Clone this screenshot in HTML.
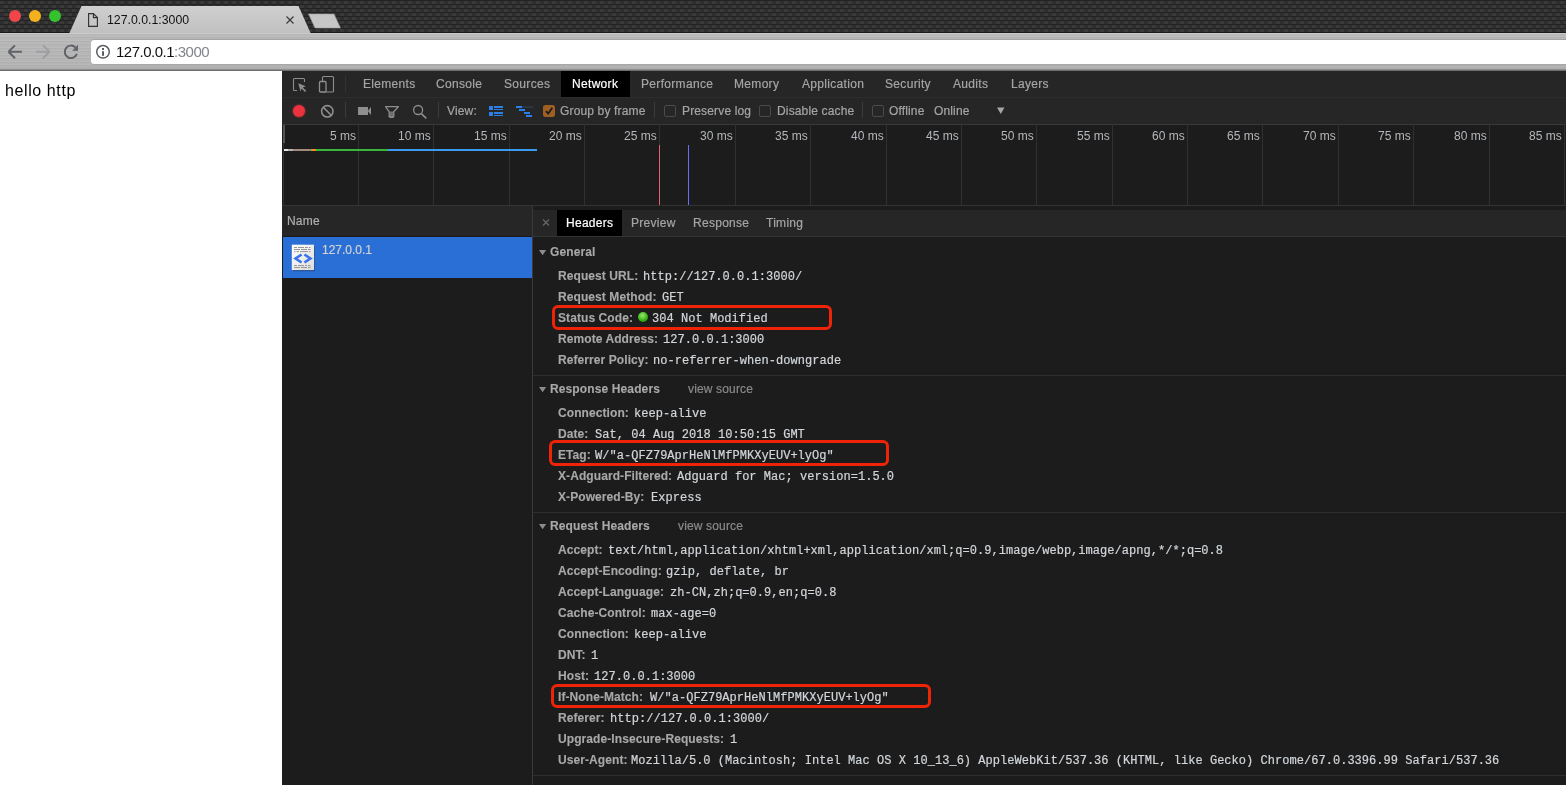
<!DOCTYPE html>
<html><head><meta charset="utf-8">
<style>
*{margin:0;padding:0;box-sizing:border-box}
html,body{width:1566px;height:785px;overflow:hidden;background:#fff;font-family:"Liberation Sans",sans-serif}
.a{position:absolute;white-space:nowrap;will-change:transform}
.r{position:absolute}
#strip{position:absolute;left:0;top:0;width:1566px;height:33px;background-color:#353535;border-bottom:1px solid #1c1c1c;
 background-image:
 linear-gradient(45deg,#232323 25%,transparent 25%,transparent 75%,#232323 75%),
 linear-gradient(45deg,#232323 25%,transparent 25%,transparent 75%,#232323 75%);
 background-size:8px 8px;background-position:0 0,4px 4px}
#toolbar{position:absolute;left:0;top:33px;width:1566px;height:38px;
 background:repeating-linear-gradient(180deg,rgba(255,255,255,0.07) 0 1px,rgba(0,0,0,0.03) 1px 2px,transparent 2px 3.5px),linear-gradient(#cecece 0px,#bfbfbf 1px,#b8b8b8 3px,#b4b4b4 34px,#a4a4a4 36px,#7a7a7a 37.2px,#5a5a5a 38px)}
#url{position:absolute;left:91px;top:40px;width:1475px;height:24px;background:#fff;border-radius:3px 0 0 3px;box-shadow:0 -1px 0 #a4a4a4,0 1px 0 #a8a8a8}
</style></head><body>
<svg class="a" style="left:0;top:0" width="1566" height="33"><defs><pattern id="cf" x="0" y="1" width="8" height="8" patternUnits="userSpaceOnUse">
<rect width="8" height="8" fill="#222"/>
<rect x="0" y="0" width="4" height="3" fill="#393939"/><rect x="0" y="4" width="4" height="3" fill="#2e2e2e"/>
<rect x="4" y="4" width="4" height="3" fill="#393939"/><rect x="4" y="0" width="4" height="3" fill="#2e2e2e"/>
</pattern></defs><rect width="1566" height="32" fill="url(#cf)"/><rect y="32" width="1566" height="1" fill="#1a1a1a"/></svg>
<svg class="a" style="left:0;top:0" width="360" height="34">
 <defs><linearGradient id="tabg" x1="0" y1="0" x2="0" y2="1"><stop offset="0" stop-color="#cfcfcf"/><stop offset="1" stop-color="#c0c0c0"/></linearGradient></defs>
 <polygon points="69,34 81.5,6 298.5,6 311,34" fill="url(#tabg)"/>
 <polygon points="308.5,14 334,14 340.5,28 315,28" fill="#c6c6c6" stroke="#9a9a9a" stroke-width="0.6"/>
 <circle cx="15" cy="16" r="6" fill="#f0464a"/>
 <circle cx="35" cy="16" r="6" fill="#f5b01e"/>
 <circle cx="55" cy="16" r="6" fill="#36c22e"/>
 <path d="M88.6,13.6 H93.4 L97.4,17.6 V26.4 H88.6 Z" fill="none" stroke="#333" stroke-width="1.15" stroke-linejoin="miter"/><path d="M93.4,13.6 V17.6 H97.4" fill="none" stroke="#333" stroke-width="1.15"/>
 <path d="M286.5,16.5 L293.5,23.5 M293.5,16.5 L286.5,23.5" stroke="#3a3a3a" stroke-width="1.2"/>
</svg>
<div class="a" style="left:107px;top:12.24px;font-size:12.3px;line-height:17px;color:#111;font-weight:normal;font-family:'Liberation Sans',sans-serif;">127.0.0.1:3000</div>
<div id="toolbar"></div><div id="url"></div>
<svg class="a" style="left:0;top:33px" width="120" height="38">
 <path d="M8.5,18.8 H21.8 M8.5,18.8 L15,12.4 M8.5,18.8 L15,25.2" stroke="#5f6266" stroke-width="2" fill="none"/>
 <path d="M49.5,18.8 H36.2 M49.5,18.8 L43,12.4 M49.5,18.8 L43,25.2" stroke="#9c9ea1" stroke-width="2" fill="none"/>
 <path d="M76.83,20.92 A6.2,6.2 0 1 1 75.38,14.42" stroke="#5f6266" stroke-width="2" fill="none"/>
 <path d="M78,11.8 L78,17.8 L72.2,17.8 Z" fill="#5f6266"/>
 <circle cx="103" cy="18.8" r="6.3" stroke="#5a5e63" stroke-width="1.5" fill="none"/>
 <rect x="102" y="18.2" width="2" height="4.6" fill="#5a5e63"/>
 <rect x="102" y="15" width="2" height="2" fill="#5a5e63"/>
</svg>
<div class="a" style="left:116px;top:41.30px;font-size:15px;line-height:21px;color:#111;font-weight:normal;font-family:'Liberation Sans',sans-serif;letter-spacing:-0.5px">127.0.0.1<span style="color:#80868b">:3000</span></div>
<div class="r" style="left:0;top:71px;width:282px;height:714px;background:#fff"></div>
<div class="a" style="left:5px;top:80.46px;font-size:16px;line-height:22px;color:#000;font-weight:normal;font-family:'Liberation Sans',sans-serif;letter-spacing:0.6px">hello http</div>
<div class="r" style="left:282px;top:71px;width:1284px;height:714px;background:#1c1c1c"></div>
<div class="r" style="left:282px;top:71px;width:1284px;height:27px;background:#262626;border-bottom:1px solid #2d2d2d"></div>
<div class="r" style="left:282px;top:98px;width:1284px;height:27px;background:#262626;border-bottom:1px solid #393939"></div>
<div class="r" style="left:561px;top:71px;width:69px;height:26px;background:#000"></div>
<div class="a" style="left:362.7px;top:76.34px;font-size:12px;line-height:17px;color:#a5a5a5;font-weight:normal;font-family:'Liberation Sans',sans-serif;letter-spacing:0.32px;-webkit-text-stroke:0.2px #a5a5a5">Elements</div>
<div class="a" style="left:435.5px;top:76.34px;font-size:12px;line-height:17px;color:#a5a5a5;font-weight:normal;font-family:'Liberation Sans',sans-serif;letter-spacing:0.32px;-webkit-text-stroke:0.2px #a5a5a5">Console</div>
<div class="a" style="left:503.7px;top:76.34px;font-size:12px;line-height:17px;color:#a5a5a5;font-weight:normal;font-family:'Liberation Sans',sans-serif;letter-spacing:0.32px;-webkit-text-stroke:0.2px #a5a5a5">Sources</div>
<div class="a" style="left:572.0px;top:76.34px;font-size:12px;line-height:17px;color:#fff;font-weight:normal;font-family:'Liberation Sans',sans-serif;letter-spacing:0.32px;-webkit-text-stroke:0.2px #fff">Network</div>
<div class="a" style="left:640.7px;top:76.34px;font-size:12px;line-height:17px;color:#a5a5a5;font-weight:normal;font-family:'Liberation Sans',sans-serif;letter-spacing:0.32px;-webkit-text-stroke:0.2px #a5a5a5">Performance</div>
<div class="a" style="left:733.8000000000001px;top:76.34px;font-size:12px;line-height:17px;color:#a5a5a5;font-weight:normal;font-family:'Liberation Sans',sans-serif;letter-spacing:0.32px;-webkit-text-stroke:0.2px #a5a5a5">Memory</div>
<div class="a" style="left:801.7px;top:76.34px;font-size:12px;line-height:17px;color:#a5a5a5;font-weight:normal;font-family:'Liberation Sans',sans-serif;letter-spacing:0.32px;-webkit-text-stroke:0.2px #a5a5a5">Application</div>
<div class="a" style="left:885.4000000000001px;top:76.34px;font-size:12px;line-height:17px;color:#a5a5a5;font-weight:normal;font-family:'Liberation Sans',sans-serif;letter-spacing:0.32px;-webkit-text-stroke:0.2px #a5a5a5">Security</div>
<div class="a" style="left:952.9000000000001px;top:76.34px;font-size:12px;line-height:17px;color:#a5a5a5;font-weight:normal;font-family:'Liberation Sans',sans-serif;letter-spacing:0.32px;-webkit-text-stroke:0.2px #a5a5a5">Audits</div>
<div class="a" style="left:1010.8000000000001px;top:76.34px;font-size:12px;line-height:17px;color:#a5a5a5;font-weight:normal;font-family:'Liberation Sans',sans-serif;letter-spacing:0.32px;-webkit-text-stroke:0.2px #a5a5a5">Layers</div>
<svg class="a" style="left:282px;top:71px" width="80" height="26">
 <path d="M15,19.5 H12.5 Q11.5,19.5 11.5,18.5 V8.5 Q11.5,7.5 12.5,7.5 H21.5 Q22.5,7.5 22.5,8.5 V11" fill="none" stroke="#8e8e8e" stroke-width="1.1"/>
 <path d="M16.2,12.2 L23.8,15.2 L20.8,16.4 L24.2,19.8 L23,21 L19.6,17.6 L18.6,20.4 Z" fill="#8e8e8e"/>
 <rect x="40.5" y="5.5" width="11" height="15.5" rx="1" fill="none" stroke="#8e8e8e" stroke-width="1.1"/>
 <rect x="37.5" y="10.5" width="6.5" height="10.5" rx="1" fill="#262626" stroke="#8e8e8e" stroke-width="1.3"/>
 <rect x="63" y="5" width="1" height="16" fill="#333"/>
</svg>
<svg class="a" style="left:282px;top:97px" width="280" height="27">
 <circle cx="17" cy="14" r="7.5" fill="#e8333d" opacity="0.18"/>
 <circle cx="17" cy="14" r="6.1" fill="#ea333e"/>
 <circle cx="45.3" cy="14.3" r="5.7" fill="none" stroke="#8e8e8e" stroke-width="1.6"/>
 <path d="M41.4,10.4 L49.2,18.2" stroke="#8e8e8e" stroke-width="1.6"/>
 <rect x="63" y="5" width="1" height="16" fill="#3a3a3a"/>
 <rect x="76" y="10" width="10" height="8" fill="#8e8e8e"/>
 <path d="M85.8,14 L89,10 V18 Z" fill="#8e8e8e"/>
 <path d="M107.6,14.6 H111.4 V19.6 Q109.5,21 107.6,19.6 Z" fill="#6e6e6e"/>
 <path d="M103.6,9.6 H116.4 L111.8,14.8 V19.6 Q109.5,21.2 107.2,19.6 V14.8 Z" fill="none" stroke="#8e8e8e" stroke-width="1.3" stroke-linejoin="round"/>
 <circle cx="136.1" cy="13" r="4.5" fill="none" stroke="#8e8e8e" stroke-width="1.3"/>
 <path d="M139.3,16.6 L144.3,21.4" stroke="#8e8e8e" stroke-width="1.6"/>
 <rect x="156" y="5" width="1" height="16" fill="#3a3a3a"/>
 <g fill="#2a80e6">
 <rect x="207" y="9" width="4" height="4"/><rect x="212" y="9" width="9" height="2"/><rect x="212" y="12" width="9" height="1"/>
 <rect x="207" y="15" width="4" height="4"/><rect x="212" y="15" width="9" height="2"/><rect x="212" y="18" width="9" height="1"/>
 <rect x="234" y="9" width="6" height="2"/><rect x="237" y="12" width="6" height="2"/><rect x="242" y="15" width="6" height="2"/><rect x="244" y="18" width="6" height="2"/>
 </g>
 <rect x="240" y="9" width="11" height="2" fill="#283646"/>
 <rect x="261" y="8" width="12" height="12" rx="2.5" fill="#a05f22"/>
 <path d="M263.9,14.2 L266.2,16.6 L270.3,10.8" fill="none" stroke="#1c1c1c" stroke-width="1.8"/>
</svg>
<div class="a" style="left:447.2px;top:103.34px;font-size:12px;line-height:17px;color:#a5a5a5;font-weight:normal;font-family:'Liberation Sans',sans-serif;letter-spacing:0.15px;-webkit-text-stroke:0.2px #a5a5a5">View:</div>
<div class="a" style="left:560.2px;top:103.34px;font-size:12px;line-height:17px;color:#a5a5a5;font-weight:normal;font-family:'Liberation Sans',sans-serif;letter-spacing:0.15px;-webkit-text-stroke:0.2px #a5a5a5">Group by frame</div>
<div class="r" style="left:654px;top:102px;width:1px;height:16px;background:#3a3a3a"></div>
<div class="r" style="left:664px;top:105px;width:12px;height:12px;border:1px solid #4a4a4a;border-radius:2px"></div>
<div class="r" style="left:759px;top:105px;width:12px;height:12px;border:1px solid #4a4a4a;border-radius:2px"></div>
<div class="r" style="left:872px;top:105px;width:12px;height:12px;border:1px solid #4a4a4a;border-radius:2px"></div>
<div class="a" style="left:681.7px;top:103.34px;font-size:12px;line-height:17px;color:#a5a5a5;font-weight:normal;font-family:'Liberation Sans',sans-serif;letter-spacing:0.15px;-webkit-text-stroke:0.2px #a5a5a5">Preserve log</div>
<div class="a" style="left:776.7px;top:103.34px;font-size:12px;line-height:17px;color:#a5a5a5;font-weight:normal;font-family:'Liberation Sans',sans-serif;letter-spacing:0.15px;-webkit-text-stroke:0.2px #a5a5a5">Disable cache</div>
<div class="r" style="left:862px;top:102px;width:1px;height:16px;background:#3a3a3a"></div>
<div class="a" style="left:888.9000000000001px;top:103.34px;font-size:12px;line-height:17px;color:#a5a5a5;font-weight:normal;font-family:'Liberation Sans',sans-serif;letter-spacing:0.15px;-webkit-text-stroke:0.2px #a5a5a5">Offline</div>
<div class="a" style="left:933.6px;top:103.34px;font-size:12px;line-height:17px;color:#a5a5a5;font-weight:normal;font-family:'Liberation Sans',sans-serif;letter-spacing:0.15px;-webkit-text-stroke:0.2px #a5a5a5">Online</div>
<svg class="a" style="left:995px;top:105px" width="12" height="12"><path d="M2,2.5 H9.5 L5.75,9 Z" fill="#a5a5a5"/></svg>
<div class="r" style="left:282px;top:205px;width:1284px;height:1px;background:#333"></div>
<div class="r" style="left:283px;top:125px;width:2px;height:18px;background:#555"></div>
<div class="r" style="left:283px;top:143px;width:1px;height:62px;background:#333"></div>
<div class="r" style="left:358.0px;top:124px;width:1px;height:81px;background:#303030"></div>
<div class="a" style="right:1210.0px;top:128.1px;font-size:12px;line-height:16px;color:#b4b8bc">5 ms</div>
<div class="r" style="left:433.0px;top:124px;width:1px;height:81px;background:#303030"></div>
<div class="a" style="right:1135.0px;top:128.1px;font-size:12px;line-height:16px;color:#b4b8bc">10 ms</div>
<div class="r" style="left:509.0px;top:124px;width:1px;height:81px;background:#303030"></div>
<div class="a" style="right:1059.0px;top:128.1px;font-size:12px;line-height:16px;color:#b4b8bc">15 ms</div>
<div class="r" style="left:584.0px;top:124px;width:1px;height:81px;background:#303030"></div>
<div class="a" style="right:984.0px;top:128.1px;font-size:12px;line-height:16px;color:#b4b8bc">20 ms</div>
<div class="r" style="left:659.0px;top:124px;width:1px;height:81px;background:#303030"></div>
<div class="a" style="right:909.0px;top:128.1px;font-size:12px;line-height:16px;color:#b4b8bc">25 ms</div>
<div class="r" style="left:735.0px;top:124px;width:1px;height:81px;background:#303030"></div>
<div class="a" style="right:833.0px;top:128.1px;font-size:12px;line-height:16px;color:#b4b8bc">30 ms</div>
<div class="r" style="left:810.0px;top:124px;width:1px;height:81px;background:#303030"></div>
<div class="a" style="right:758.0px;top:128.1px;font-size:12px;line-height:16px;color:#b4b8bc">35 ms</div>
<div class="r" style="left:886.0px;top:124px;width:1px;height:81px;background:#303030"></div>
<div class="a" style="right:682.0px;top:128.1px;font-size:12px;line-height:16px;color:#b4b8bc">40 ms</div>
<div class="r" style="left:961.0px;top:124px;width:1px;height:81px;background:#303030"></div>
<div class="a" style="right:607.0px;top:128.1px;font-size:12px;line-height:16px;color:#b4b8bc">45 ms</div>
<div class="r" style="left:1036.0px;top:124px;width:1px;height:81px;background:#303030"></div>
<div class="a" style="right:532.0px;top:128.1px;font-size:12px;line-height:16px;color:#b4b8bc">50 ms</div>
<div class="r" style="left:1112.0px;top:124px;width:1px;height:81px;background:#303030"></div>
<div class="a" style="right:456.0px;top:128.1px;font-size:12px;line-height:16px;color:#b4b8bc">55 ms</div>
<div class="r" style="left:1187.0px;top:124px;width:1px;height:81px;background:#303030"></div>
<div class="a" style="right:381.0px;top:128.1px;font-size:12px;line-height:16px;color:#b4b8bc">60 ms</div>
<div class="r" style="left:1262.0px;top:124px;width:1px;height:81px;background:#303030"></div>
<div class="a" style="right:306.0px;top:128.1px;font-size:12px;line-height:16px;color:#b4b8bc">65 ms</div>
<div class="r" style="left:1338.0px;top:124px;width:1px;height:81px;background:#303030"></div>
<div class="a" style="right:230.0px;top:128.1px;font-size:12px;line-height:16px;color:#b4b8bc">70 ms</div>
<div class="r" style="left:1413.0px;top:124px;width:1px;height:81px;background:#303030"></div>
<div class="a" style="right:155.0px;top:128.1px;font-size:12px;line-height:16px;color:#b4b8bc">75 ms</div>
<div class="r" style="left:1489.0px;top:124px;width:1px;height:81px;background:#303030"></div>
<div class="a" style="right:79.0px;top:128.1px;font-size:12px;line-height:16px;color:#b4b8bc">80 ms</div>
<div class="r" style="left:1564.0px;top:124px;width:1px;height:81px;background:#303030"></div>
<div class="a" style="right:4.0px;top:128.1px;font-size:12px;line-height:16px;color:#b4b8bc">85 ms</div>
<div class="r" style="left:284px;top:149px;width:4px;height:2px;background:#e4e4e4"></div>
<div class="r" style="left:288px;top:149px;width:5px;height:2px;background:#b4b4b4"></div>
<div class="r" style="left:293px;top:149px;width:17px;height:2px;background:#a3897e"></div>
<div class="r" style="left:310px;top:149px;width:1px;height:2px;background:#2aa198"></div>
<div class="r" style="left:311px;top:149px;width:5px;height:2px;background:#f68b1f"></div>
<div class="r" style="left:316px;top:149px;width:72px;height:2px;background:#3cb53c"></div>
<div class="r" style="left:388px;top:149px;width:149px;height:2px;background:#3a9bf0"></div>
<div class="r" style="left:659px;top:145px;width:1px;height:60px;background:#e0636b"></div>
<div class="r" style="left:688px;top:145px;width:1px;height:60px;background:#6a6ef0"></div>
<div class="r" style="left:282px;top:206px;width:250px;height:31px;background:#262626;border-bottom:1px solid #1a1a1a"></div>
<div class="a" style="left:287px;top:213.34px;font-size:12px;line-height:17px;color:#b0b0b0;font-weight:normal;font-family:'Liberation Sans',sans-serif;letter-spacing:0.2px;-webkit-text-stroke:0.2px #b0b0b0">Name</div>
<div class="r" style="left:283px;top:237px;width:249px;height:41px;background:#2a6fd5"></div>
<svg class="a" style="left:291px;top:244px" width="26" height="29">
 <defs><linearGradient id="icg" x1="0" y1="0" x2="1" y2="1"><stop offset="0" stop-color="#fff"/><stop offset="1" stop-color="#dcdcdc"/></linearGradient></defs>
 <rect x="1.8" y="1.8" width="22.2" height="25.4" fill="#0b2a55" opacity="0.55"/>
 <rect x="0.8" y="0.7" width="22.3" height="25.4" fill="url(#icg)"/>
 <g stroke="#8a8a8a" stroke-width="0.9" fill="none">
 <path d="M3,3.5 H6 M7,3.5 H13 M14,3.5 H17 M18,3.5 H19.5"/>
 <path d="M3,5.5 H9 M10,5.5 H16 M17,5.5 H19.5"/>
 <path d="M3,7.6 H4.5 M5.5,7.6 H8 M9,7.6 H17 M18,7.6 H19.5"/>
 <path d="M3,21.6 H6 M7,21.6 H13 M14,21.6 H16 M17,21.6 H19.5"/>
 <path d="M3,23.6 H9 M10,23.6 H16 M17,23.6 H19.5"/>
 </g>
 <path d="M10.6,10.5 L4.6,14.5 L10.6,18.5 M13.4,10.5 L19.4,14.5 L13.4,18.5" fill="none" stroke="#3a74ea" stroke-width="2.7"/>
</svg>
<div class="a" style="left:322px;top:242.34px;font-size:12px;line-height:17px;color:#d2d2d2;font-weight:normal;font-family:'Liberation Sans',sans-serif;-webkit-text-stroke:0.2px #d2d2d2">127.0.0.1</div>
<div class="r" style="left:532px;top:206px;width:1px;height:579px;background:#3a3a3a"></div>
<div class="r" style="left:533px;top:210px;width:1033px;height:27px;background:#262626;border-bottom:1px solid #353535"></div>
<div class="r" style="left:557px;top:210px;width:65px;height:26px;background:#000"></div>
<svg class="a" style="left:540px;top:216px" width="12" height="12"><path d="M3,3.5 L9,9.5 M9,3.5 L3,9.5" stroke="#6a6a6a" stroke-width="1.1"/></svg>
<div class="a" style="left:566.2px;top:215.34px;font-size:12px;line-height:17px;color:#fff;font-weight:normal;font-family:'Liberation Sans',sans-serif;letter-spacing:0.28px;-webkit-text-stroke:0.2px #fff">Headers</div>
<div class="a" style="left:630.9000000000001px;top:215.34px;font-size:12px;line-height:17px;color:#a5a5a5;font-weight:normal;font-family:'Liberation Sans',sans-serif;letter-spacing:0.28px;-webkit-text-stroke:0.2px #a5a5a5">Preview</div>
<div class="a" style="left:692.6px;top:215.34px;font-size:12px;line-height:17px;color:#a5a5a5;font-weight:normal;font-family:'Liberation Sans',sans-serif;letter-spacing:0.28px;-webkit-text-stroke:0.2px #a5a5a5">Response</div>
<div class="a" style="left:765.7px;top:215.34px;font-size:12px;line-height:17px;color:#a5a5a5;font-weight:normal;font-family:'Liberation Sans',sans-serif;letter-spacing:0.28px;-webkit-text-stroke:0.2px #a5a5a5">Timing</div>
<svg class="a" style="left:538px;top:248px" width="10" height="8"><path d="M1,1.9 H8.2 L4.6,7.3 Z" fill="#8c8c8c"/></svg>
<div class="a" style="left:549.5px;top:244.34px;font-size:12px;line-height:17px;color:#a8a8a8;font-weight:bold;font-family:'Liberation Sans',sans-serif;letter-spacing:0.12px;-webkit-text-stroke:0.12px #a8a8a8">General</div>
<div class="a" style="left:557.8px;top:268.34px;font-size:12px;line-height:17px;color:#a8a8a8;font-weight:bold;font-family:'Liberation Sans',sans-serif;letter-spacing:0.08px;-webkit-text-stroke:0.12px #a8a8a8">Request URL:</div>
<div class="a" style="left:642.8px;top:269.30px;font-size:12px;line-height:17px;color:#d2d6da;font-weight:normal;font-family:'Liberation Mono',monospace;letter-spacing:0.035px;-webkit-text-stroke:0.2px #d2d6da">http://127.0.0.1:3000/</div>
<div class="a" style="left:557.8px;top:289.34px;font-size:12px;line-height:17px;color:#a8a8a8;font-weight:bold;font-family:'Liberation Sans',sans-serif;letter-spacing:0.08px;-webkit-text-stroke:0.12px #a8a8a8">Request Method:</div>
<div class="a" style="left:662.0px;top:290.30px;font-size:12px;line-height:17px;color:#d2d6da;font-weight:normal;font-family:'Liberation Mono',monospace;letter-spacing:0.035px;-webkit-text-stroke:0.2px #d2d6da">GET</div>
<div class="a" style="left:557.8px;top:310.34px;font-size:12px;line-height:17px;color:#a8a8a8;font-weight:bold;font-family:'Liberation Sans',sans-serif;letter-spacing:0.08px;-webkit-text-stroke:0.12px #a8a8a8">Status Code:</div>
<div class="a" style="left:651.8px;top:311.30px;font-size:12px;line-height:17px;color:#d2d6da;font-weight:normal;font-family:'Liberation Mono',monospace;letter-spacing:0.035px;-webkit-text-stroke:0.2px #d2d6da">304 Not Modified</div>
<div class="a" style="left:557.8px;top:331.34px;font-size:12px;line-height:17px;color:#a8a8a8;font-weight:bold;font-family:'Liberation Sans',sans-serif;letter-spacing:0.08px;-webkit-text-stroke:0.12px #a8a8a8">Remote Address:</div>
<div class="a" style="left:662.6999999999999px;top:332.30px;font-size:12px;line-height:17px;color:#d2d6da;font-weight:normal;font-family:'Liberation Mono',monospace;letter-spacing:0.035px;-webkit-text-stroke:0.2px #d2d6da">127.0.0.1:3000</div>
<div class="a" style="left:557.8px;top:352.34px;font-size:12px;line-height:17px;color:#a8a8a8;font-weight:bold;font-family:'Liberation Sans',sans-serif;letter-spacing:0.08px;-webkit-text-stroke:0.12px #a8a8a8">Referrer Policy:</div>
<div class="a" style="left:652.5px;top:353.30px;font-size:12px;line-height:17px;color:#d2d6da;font-weight:normal;font-family:'Liberation Mono',monospace;letter-spacing:0.035px;-webkit-text-stroke:0.2px #d2d6da">no-referrer-when-downgrade</div>
<div class="r" style="left:638px;top:312px;width:10px;height:10px;border-radius:50%;background:radial-gradient(circle at 45% 35%,#9be86a,#2fb010 60%,#1f8a08)"></div>
<div class="r" style="left:533px;top:375px;width:1033px;height:1px;background:#2e2e2e"></div>
<svg class="a" style="left:538px;top:385px" width="10" height="8"><path d="M1,1.9 H8.2 L4.6,7.3 Z" fill="#8c8c8c"/></svg>
<div class="a" style="left:549.5px;top:381.34px;font-size:12px;line-height:17px;color:#a8a8a8;font-weight:bold;font-family:'Liberation Sans',sans-serif;letter-spacing:0.12px;-webkit-text-stroke:0.12px #a8a8a8">Response Headers</div>
<div class="a" style="left:687.9px;top:381.34px;font-size:12px;line-height:17px;color:#8a8a8a;font-weight:normal;font-family:'Liberation Sans',sans-serif;letter-spacing:0.15px;-webkit-text-stroke:0.2px #8a8a8a">view source</div>
<div class="a" style="left:557.8px;top:405.34px;font-size:12px;line-height:17px;color:#a8a8a8;font-weight:bold;font-family:'Liberation Sans',sans-serif;letter-spacing:0.08px;-webkit-text-stroke:0.12px #a8a8a8">Connection:</div>
<div class="a" style="left:633.6px;top:406.30px;font-size:12px;line-height:17px;color:#d2d6da;font-weight:normal;font-family:'Liberation Mono',monospace;letter-spacing:0.035px;-webkit-text-stroke:0.2px #d2d6da">keep-alive</div>
<div class="a" style="left:557.8px;top:426.34px;font-size:12px;line-height:17px;color:#a8a8a8;font-weight:bold;font-family:'Liberation Sans',sans-serif;letter-spacing:0.08px;-webkit-text-stroke:0.12px #a8a8a8">Date:</div>
<div class="a" style="left:594.5px;top:427.30px;font-size:12px;line-height:17px;color:#d2d6da;font-weight:normal;font-family:'Liberation Mono',monospace;letter-spacing:0.035px;-webkit-text-stroke:0.2px #d2d6da">Sat, 04 Aug 2018 10:50:15 GMT</div>
<div class="a" style="left:557.8px;top:447.34px;font-size:12px;line-height:17px;color:#a8a8a8;font-weight:bold;font-family:'Liberation Sans',sans-serif;letter-spacing:0.08px;-webkit-text-stroke:0.12px #a8a8a8">ETag:</div>
<div class="a" style="left:594.5px;top:448.30px;font-size:12px;line-height:17px;color:#d2d6da;font-weight:normal;font-family:'Liberation Mono',monospace;letter-spacing:0.035px;-webkit-text-stroke:0.2px #d2d6da">W/"a-QFZ79AprHeNlMfPMKXyEUV+lyOg"</div>
<div class="a" style="left:557.8px;top:468.34px;font-size:12px;line-height:17px;color:#a8a8a8;font-weight:bold;font-family:'Liberation Sans',sans-serif;letter-spacing:0.08px;-webkit-text-stroke:0.12px #a8a8a8">X-Adguard-Filtered:</div>
<div class="a" style="left:677.0px;top:469.30px;font-size:12px;line-height:17px;color:#d2d6da;font-weight:normal;font-family:'Liberation Mono',monospace;letter-spacing:0.035px;-webkit-text-stroke:0.2px #d2d6da">Adguard for Mac; version=1.5.0</div>
<div class="a" style="left:557.8px;top:489.34px;font-size:12px;line-height:17px;color:#a8a8a8;font-weight:bold;font-family:'Liberation Sans',sans-serif;letter-spacing:0.08px;-webkit-text-stroke:0.12px #a8a8a8">X-Powered-By:</div>
<div class="a" style="left:650.6999999999999px;top:490.30px;font-size:12px;line-height:17px;color:#d2d6da;font-weight:normal;font-family:'Liberation Mono',monospace;letter-spacing:0.035px;-webkit-text-stroke:0.2px #d2d6da">Express</div>
<div class="r" style="left:533px;top:512px;width:1033px;height:1px;background:#2e2e2e"></div>
<svg class="a" style="left:538px;top:522px" width="10" height="8"><path d="M1,1.9 H8.2 L4.6,7.3 Z" fill="#8c8c8c"/></svg>
<div class="a" style="left:549.5px;top:518.34px;font-size:12px;line-height:17px;color:#a8a8a8;font-weight:bold;font-family:'Liberation Sans',sans-serif;letter-spacing:0.12px;-webkit-text-stroke:0.12px #a8a8a8">Request Headers</div>
<div class="a" style="left:678.0px;top:518.34px;font-size:12px;line-height:17px;color:#8a8a8a;font-weight:normal;font-family:'Liberation Sans',sans-serif;letter-spacing:0.15px;-webkit-text-stroke:0.2px #8a8a8a">view source</div>
<div class="a" style="left:557.8px;top:542.34px;font-size:12px;line-height:17px;color:#a8a8a8;font-weight:bold;font-family:'Liberation Sans',sans-serif;letter-spacing:0.08px;-webkit-text-stroke:0.12px #a8a8a8">Accept:</div>
<div class="a" style="left:608.3px;top:543.30px;font-size:12px;line-height:17px;color:#d2d6da;font-weight:normal;font-family:'Liberation Mono',monospace;letter-spacing:0.035px;-webkit-text-stroke:0.2px #d2d6da">text/html,application/xhtml+xml,application/xml;q=0.9,image/webp,image/apng,*/*;q=0.8</div>
<div class="a" style="left:557.8px;top:563.34px;font-size:12px;line-height:17px;color:#a8a8a8;font-weight:bold;font-family:'Liberation Sans',sans-serif;letter-spacing:0.08px;-webkit-text-stroke:0.12px #a8a8a8">Accept-Encoding:</div>
<div class="a" style="left:666.4px;top:564.30px;font-size:12px;line-height:17px;color:#d2d6da;font-weight:normal;font-family:'Liberation Mono',monospace;letter-spacing:0.035px;-webkit-text-stroke:0.2px #d2d6da">gzip, deflate, br</div>
<div class="a" style="left:557.8px;top:584.34px;font-size:12px;line-height:17px;color:#a8a8a8;font-weight:bold;font-family:'Liberation Sans',sans-serif;letter-spacing:0.08px;-webkit-text-stroke:0.12px #a8a8a8">Accept-Language:</div>
<div class="a" style="left:669.6999999999999px;top:585.30px;font-size:12px;line-height:17px;color:#d2d6da;font-weight:normal;font-family:'Liberation Mono',monospace;letter-spacing:0.035px;-webkit-text-stroke:0.2px #d2d6da">zh-CN,zh;q=0.9,en;q=0.8</div>
<div class="a" style="left:557.8px;top:605.34px;font-size:12px;line-height:17px;color:#a8a8a8;font-weight:bold;font-family:'Liberation Sans',sans-serif;letter-spacing:0.08px;-webkit-text-stroke:0.12px #a8a8a8">Cache-Control:</div>
<div class="a" style="left:651.1999999999999px;top:606.30px;font-size:12px;line-height:17px;color:#d2d6da;font-weight:normal;font-family:'Liberation Mono',monospace;letter-spacing:0.035px;-webkit-text-stroke:0.2px #d2d6da">max-age=0</div>
<div class="a" style="left:557.8px;top:626.34px;font-size:12px;line-height:17px;color:#a8a8a8;font-weight:bold;font-family:'Liberation Sans',sans-serif;letter-spacing:0.08px;-webkit-text-stroke:0.12px #a8a8a8">Connection:</div>
<div class="a" style="left:634.0px;top:627.30px;font-size:12px;line-height:17px;color:#d2d6da;font-weight:normal;font-family:'Liberation Mono',monospace;letter-spacing:0.035px;-webkit-text-stroke:0.2px #d2d6da">keep-alive</div>
<div class="a" style="left:557.8px;top:647.34px;font-size:12px;line-height:17px;color:#a8a8a8;font-weight:bold;font-family:'Liberation Sans',sans-serif;letter-spacing:0.08px;-webkit-text-stroke:0.12px #a8a8a8">DNT:</div>
<div class="a" style="left:590.6px;top:648.30px;font-size:12px;line-height:17px;color:#d2d6da;font-weight:normal;font-family:'Liberation Mono',monospace;letter-spacing:0.035px;-webkit-text-stroke:0.2px #d2d6da">1</div>
<div class="a" style="left:557.8px;top:668.34px;font-size:12px;line-height:17px;color:#a8a8a8;font-weight:bold;font-family:'Liberation Sans',sans-serif;letter-spacing:0.08px;-webkit-text-stroke:0.12px #a8a8a8">Host:</div>
<div class="a" style="left:594.4px;top:669.30px;font-size:12px;line-height:17px;color:#d2d6da;font-weight:normal;font-family:'Liberation Mono',monospace;letter-spacing:0.035px;-webkit-text-stroke:0.2px #d2d6da">127.0.0.1:3000</div>
<div class="a" style="left:557.8px;top:689.34px;font-size:12px;line-height:17px;color:#a8a8a8;font-weight:bold;font-family:'Liberation Sans',sans-serif;letter-spacing:0.08px;-webkit-text-stroke:0.12px #a8a8a8">If-None-Match:</div>
<div class="a" style="left:650.1999999999999px;top:690.30px;font-size:12px;line-height:17px;color:#d2d6da;font-weight:normal;font-family:'Liberation Mono',monospace;letter-spacing:0.035px;-webkit-text-stroke:0.2px #d2d6da">W/"a-QFZ79AprHeNlMfPMKXyEUV+lyOg"</div>
<div class="a" style="left:557.8px;top:710.34px;font-size:12px;line-height:17px;color:#a8a8a8;font-weight:bold;font-family:'Liberation Sans',sans-serif;letter-spacing:0.08px;-webkit-text-stroke:0.12px #a8a8a8">Referer:</div>
<div class="a" style="left:610.0px;top:711.30px;font-size:12px;line-height:17px;color:#d2d6da;font-weight:normal;font-family:'Liberation Mono',monospace;letter-spacing:0.035px;-webkit-text-stroke:0.2px #d2d6da">http://127.0.0.1:3000/</div>
<div class="a" style="left:557.8px;top:731.34px;font-size:12px;line-height:17px;color:#a8a8a8;font-weight:bold;font-family:'Liberation Sans',sans-serif;letter-spacing:0.08px;-webkit-text-stroke:0.12px #a8a8a8">Upgrade-Insecure-Requests:</div>
<div class="a" style="left:729.8px;top:732.30px;font-size:12px;line-height:17px;color:#d2d6da;font-weight:normal;font-family:'Liberation Mono',monospace;letter-spacing:0.035px;-webkit-text-stroke:0.2px #d2d6da">1</div>
<div class="a" style="left:557.8px;top:752.34px;font-size:12px;line-height:17px;color:#a8a8a8;font-weight:bold;font-family:'Liberation Sans',sans-serif;letter-spacing:0.08px;-webkit-text-stroke:0.12px #a8a8a8">User-Agent:</div>
<div class="a" style="left:631.1px;top:753.30px;font-size:12px;line-height:17px;color:#d2d6da;font-weight:normal;font-family:'Liberation Mono',monospace;letter-spacing:0.035px;-webkit-text-stroke:0.2px #d2d6da">Mozilla/5.0 (Macintosh; Intel Mac OS X 10_13_6) AppleWebKit/537.36 (KHTML, like Gecko) Chrome/67.0.3396.99 Safari/537.36</div>
<div class="r" style="left:533px;top:775px;width:1033px;height:1px;background:#2e2e2e"></div>
<div class="r" style="left:551.5px;top:305px;width:280.5px;height:25px;border:3px solid #ef2308;border-radius:6px"></div>
<div class="r" style="left:548.5px;top:440px;width:340.5px;height:26px;border:3px solid #ef2308;border-radius:6px"></div>
<div class="r" style="left:551px;top:684px;width:380px;height:24px;border:3px solid #ef2308;border-radius:6px"></div>
</body></html>
